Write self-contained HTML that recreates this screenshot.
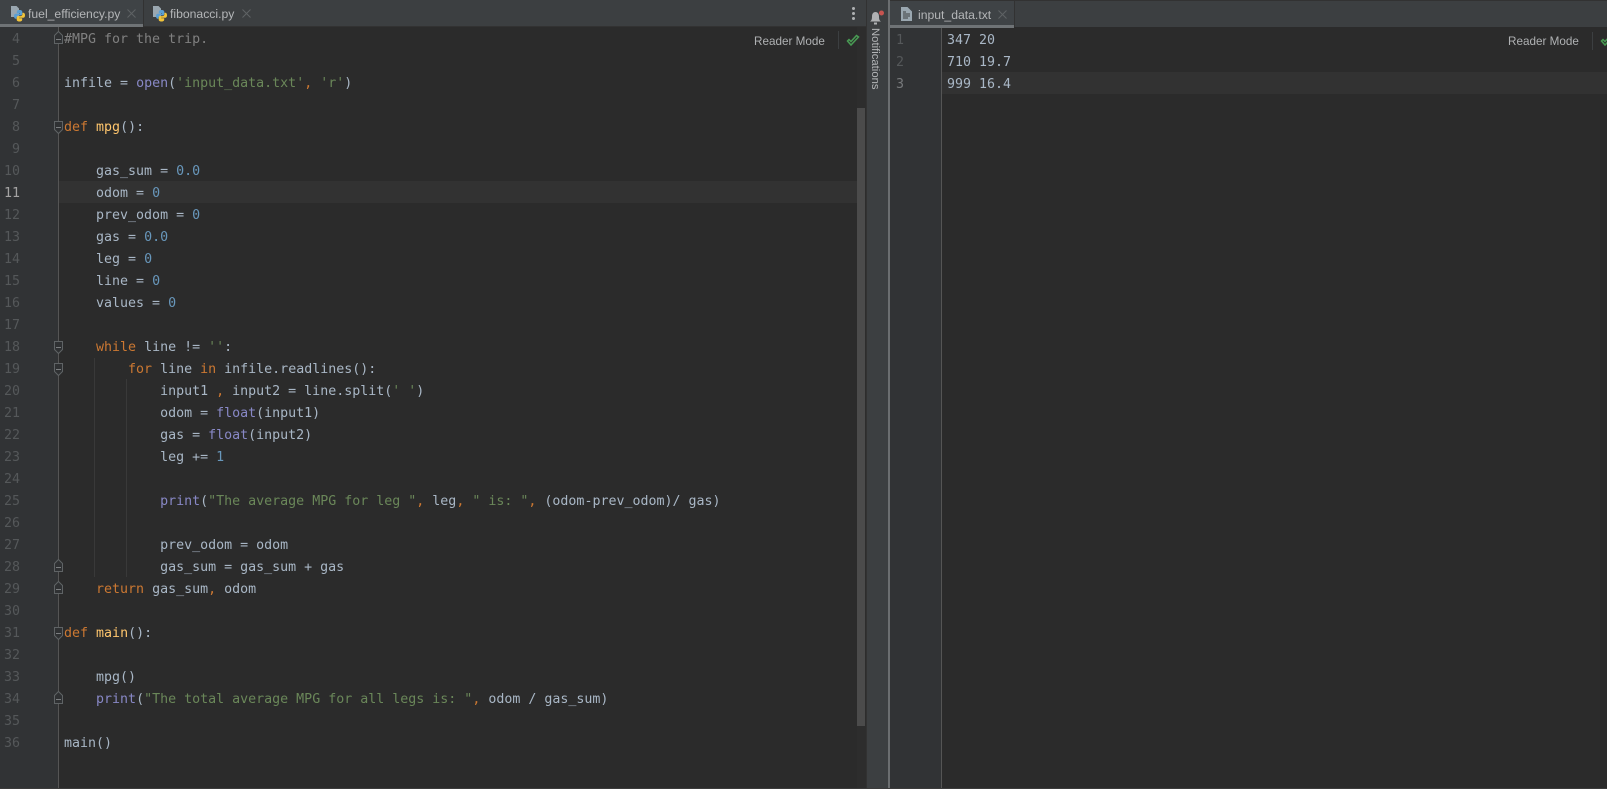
<!DOCTYPE html>
<html>
<head>
<meta charset="utf-8">
<style>
html,body{margin:0;padding:0;background:#2b2b2b;width:1607px;height:789px;overflow:hidden}
.a{position:absolute}
#root{position:relative;width:1607px;height:789px;overflow:hidden;background:#2b2b2b}
pre{margin:0;font-family:"DejaVu Sans Mono","Liberation Mono",monospace;font-size:13.3px;line-height:22px;color:#a9b7c6}
.k{color:#cc7832}.s{color:#6a8759}.n{color:#6897bb}.b{color:#8888c6}.f{color:#ffc66d}.c{color:#808080}
.tab{font-family:"Liberation Sans",sans-serif;font-size:12.2px;color:#b4b6b8;line-height:16px;white-space:nowrap}
.rm{font-family:"Liberation Sans",sans-serif;font-size:11.7px;color:#afb1b3;line-height:16px;white-space:nowrap}
.ln{color:#55585a;text-align:right;width:20px}
</style>
</head>
<body>
<div id="root">
<!-- left tab bar -->
<div class="a" style="left:0;top:0;width:866px;height:27px;background:#3c3f41"></div>
<div class="a" style="left:0;top:0;width:143px;height:24px;background:#3f4346"></div>
<div class="a" style="left:143px;top:0;width:1px;height:27px;background:#323232"></div>
<div class="a" style="left:0;top:26px;width:866px;height:1px;background:#323232"></div>
<div class="a" style="left:0;top:24px;width:143px;height:3px;background:#6f7376"></div>

<svg class="a" style="left:11px;top:6px" width="14" height="16" viewBox="0 0 14 16">
<path d="M0 0h5.500L8 2.500V11H0z" fill="#9aa7b0"/>
<path d="M8.500 4C6.500 4 5.800 4.800 5.800 6v1.200h3v.6H4.500C3.500 7.800 3 9 3 10.300s.6 2.400 1.500 2.400h1.100v-1.500c0-1 .8-1.800 1.800-1.800h2.300c.9 0 1.600-.7 1.600-1.600V6C11.300 4.800 10.500 4 8.500 4z" fill="#5a9fd4"/>
<path d="M8.500 15.500c2 0 2.700-.8 2.700-2v-1.200h-3v-.6h4.300c1 0 1.500-1.200 1.500-2.500s-.6-2.400-1.500-2.400h-1.100v1.500c0 1-.8 1.800-1.800 1.800H7.300c-.9 0-1.600.7-1.600 1.600v1.800c0 1.200.8 2 2.800 2z" fill="#f2c43a"/>
</svg>
<div class="a tab" style="left:28px;top:6px">fuel_efficiency.py</div>
<svg class="a" style="left:127px;top:9px" width="9" height="9"><path d="M.5.5l8 8M8.500.5l-8 8" stroke="#5f6365" stroke-width="1"/></svg>

<svg class="a" style="left:153px;top:6px" width="14" height="16" viewBox="0 0 14 16">
<path d="M0 0h5.500L8 2.500V11H0z" fill="#9aa7b0"/>
<path d="M8.500 4C6.500 4 5.800 4.800 5.800 6v1.200h3v.6H4.500C3.500 7.800 3 9 3 10.300s.6 2.400 1.500 2.400h1.100v-1.500c0-1 .8-1.800 1.800-1.800h2.300c.9 0 1.600-.7 1.600-1.600V6C11.300 4.800 10.500 4 8.500 4z" fill="#5a9fd4"/>
<path d="M8.500 15.500c2 0 2.700-.8 2.700-2v-1.200h-3v-.6h4.300c1 0 1.500-1.200 1.500-2.500s-.6-2.400-1.500-2.400h-1.100v1.500c0 1-.8 1.800-1.800 1.800H7.300c-.9 0-1.600.7-1.600 1.600v1.800c0 1.200.8 2 2.800 2z" fill="#f2c43a"/>
</svg>
<div class="a tab" style="left:170px;top:6px">fibonacci.py</div>
<svg class="a" style="left:242px;top:9px" width="9" height="9"><path d="M.5.5l8 8M8.500.5l-8 8" stroke="#5f6365" stroke-width="1"/></svg>

<!-- three dots -->
<div class="a" style="left:852px;top:7px;width:3px;height:3px;border-radius:2px;background:#afb1b3"></div>
<div class="a" style="left:852px;top:12px;width:3px;height:3px;border-radius:2px;background:#afb1b3"></div>
<div class="a" style="left:852px;top:17px;width:3px;height:3px;border-radius:2px;background:#afb1b3"></div>

<!-- left editor -->
<div class="a" style="left:0;top:27px;width:58px;height:762px;background:#313335"></div>
<div class="a" style="left:58px;top:27px;width:1px;height:762px;background:#555555"></div>
<div class="a" style="left:59px;top:181px;width:798px;height:22px;background:#323232"></div>
<div class="a" style="left:857px;top:27px;width:9px;height:762px;background:#2d2d2d"></div>
<div class="a" style="left:857px;top:108px;width:8px;height:618px;background:#4b4b4b"></div>
<div class="a" style="left:94px;top:358px;width:1px;height:219px;background:#393939"></div>
<div class="a" style="left:126px;top:379px;width:1px;height:198px;background:#393939"></div>

<pre class="a ln" style="left:0;top:29px">4
5
6
7
8
9
10
<span style="color:#a4a3a3">11</span>
12
13
14
15
16
17
18
19
20
21
22
23
24
25
26
27
28
29
30
31
32
33
34
35
36</pre>

<svg class="a" style="left:54px;top:27px" width="10" height="762">
<g fill="#2f3133" stroke="#5f6365" stroke-width="1">
<path transform="translate(0,12)" d="M.5 4.500V-3.500L4.500-7.500 8.500-3.500V4.500z"/>
<path transform="translate(0,100)" d="M.5-5.500H8.500V2.500L4.500 6.500 .5 2.500z"/>
<path transform="translate(0,320)" d="M.5-5.500H8.500V2.500L4.500 6.500 .5 2.500z"/>
<path transform="translate(0,342)" d="M.5-5.500H8.500V2.500L4.500 6.500 .5 2.500z"/>
<path transform="translate(0,540)" d="M.5 4.500V-3.500L4.500-7.500 8.500-3.500V4.500z"/>
<path transform="translate(0,562)" d="M.5 4.500V-3.500L4.500-7.500 8.500-3.500V4.500z"/>
<path transform="translate(0,606)" d="M.5-5.500H8.500V2.500L4.500 6.500 .5 2.500z"/>
<path transform="translate(0,672)" d="M.5 4.500V-3.500L4.500-7.500 8.500-3.500V4.500z"/>
</g>
<path stroke="#7b7e80" stroke-width="1" d="M2 12.500h5M2 100.500h5M2 320.500h5M2 342.500h5M2 540.500h5M2 562.500h5M2 606.500h5M2 672.500h5"/>
</svg>

<pre class="a" style="left:64px;top:29px"><span class="c">#MPG for the trip.</span>

infile = <span class="b">open</span>(<span class="s">'input_data.txt'</span><span class="k">,</span> <span class="s">'r'</span>)

<span class="k">def</span> <span class="f">mpg</span>():

    gas_sum = <span class="n">0.0</span>
    odom = <span class="n">0</span>
    prev_odom = <span class="n">0</span>
    gas = <span class="n">0.0</span>
    leg = <span class="n">0</span>
    line = <span class="n">0</span>
    values = <span class="n">0</span>

    <span class="k">while</span> line != <span class="s">''</span>:
        <span class="k">for</span> line <span class="k">in</span> infile.readlines():
            input1 <span class="k">,</span> input2 = line.split(<span class="s">' '</span>)
            odom = <span class="b">float</span>(input1)
            gas = <span class="b">float</span>(input2)
            leg += <span class="n">1</span>

            <span class="b">print</span>(<span class="s">"The average MPG for leg "</span><span class="k">,</span> leg<span class="k">,</span> <span class="s">" is: "</span><span class="k">,</span> (odom-prev_odom)/ gas)

            prev_odom = odom
            gas_sum = gas_sum + gas
    <span class="k">return</span> gas_sum<span class="k">,</span> odom

<span class="k">def</span> <span class="f">main</span>():

    mpg()
    <span class="b">print</span>(<span class="s">"The total average MPG for all legs is: "</span><span class="k">,</span> odom / gas_sum)

main()</pre>

<div class="a rm" style="left:754px;top:34px">Reader Mode</div>
<div class="a" style="left:838px;top:31px;width:1px;height:18px;background:#3c3f41"></div>
<svg class="a" style="left:846px;top:34px" width="14" height="13" viewBox="0 0 14 13"><path d="M1.500 7l3.500 4 7.500-8-2-1.500-5.500 6-2-2z" fill="none" stroke="#499c54" stroke-width="1.500"/></svg>

<!-- notifications strip -->
<div class="a" style="left:866px;top:0;width:1px;height:789px;background:#323232"></div>
<div class="a" style="left:867px;top:0;width:21px;height:789px;background:#3c3f41"></div>
<div class="a" style="left:888px;top:0;width:2px;height:789px;background:#6b6e70"></div>
<svg class="a" style="left:870px;top:10px" width="17" height="15" viewBox="0 0 17 15">
<path d="M0 11.500c1.500-1 2-2 2-5s1.500-4.500 3.500-4.500S9 3.500 9 6.500s.5 4 2 5z" fill="#afb1b3"/>
<rect x="4" y="12.500" width="3" height="2" fill="#afb1b3"/>
<circle cx="11.500" cy="3" r="2.500" fill="#c75450"/>
</svg>
<div class="a" style="left:867px;top:28px;width:21px;height:62px">
<div class="a tab" style="left:16px;top:0;transform-origin:0 0;transform:rotate(90deg);font-size:11.3px;line-height:16px;width:62px">Notifications</div>
</div>

<!-- right tab bar -->
<div class="a" style="left:890px;top:0;width:717px;height:27px;background:#3c3f41"></div>
<div class="a" style="left:890px;top:0;width:717px;height:1px;background:#323232"></div>
<div class="a" style="left:890px;top:1px;width:124px;height:24px;background:#3f4346"></div>
<div class="a" style="left:890px;top:25px;width:124px;height:3px;background:#6f7376"></div>
<div class="a" style="left:1014px;top:1px;width:1px;height:26px;background:#323232"></div>
<svg class="a" style="left:901px;top:7px" width="11" height="14" viewBox="0 0 11 14">
<path d="M0 0h6.500L11 4.500V14H0z" fill="#9aa7b0"/>
<path d="M2 5h3M2 7h7M2 9h7M2 11h5" stroke="#3c3f41" stroke-width="1"/>
</svg>
<div class="a tab" style="left:918px;top:7px">input_data.txt</div>
<svg class="a" style="left:998px;top:10px" width="9" height="9"><path d="M.5.5l8 8M8.500.5l-8 8" stroke="#5f6365" stroke-width="1"/></svg>

<!-- right editor -->
<div class="a" style="left:890px;top:28px;width:51px;height:761px;background:#313335"></div>
<div class="a" style="left:941px;top:28px;width:1px;height:761px;background:#555555"></div>
<div class="a" style="left:942px;top:72px;width:665px;height:22px;background:#323232"></div>
<pre class="a" style="left:896px;top:30px;color:#55585a">1
2
<span style="color:#77797b">3</span></pre>
<pre class="a" style="left:947px;top:30px">347 20
710 19.7
999 16.4</pre>
<div class="a rm" style="left:1508px;top:34px">Reader Mode</div>
<div class="a" style="left:1592px;top:32px;width:1px;height:18px;background:#3c3f41"></div>
<svg class="a" style="left:1600px;top:34px" width="14" height="13" viewBox="0 0 14 13"><path d="M1.500 7l3.500 4 7.500-8-2-1.500-5.500 6-2-2z" fill="none" stroke="#499c54" stroke-width="1.500"/></svg>

<div class="a" style="left:0;top:788px;width:1607px;height:1px;background:#3c3c3c"></div>
</div>
</body>
</html>
